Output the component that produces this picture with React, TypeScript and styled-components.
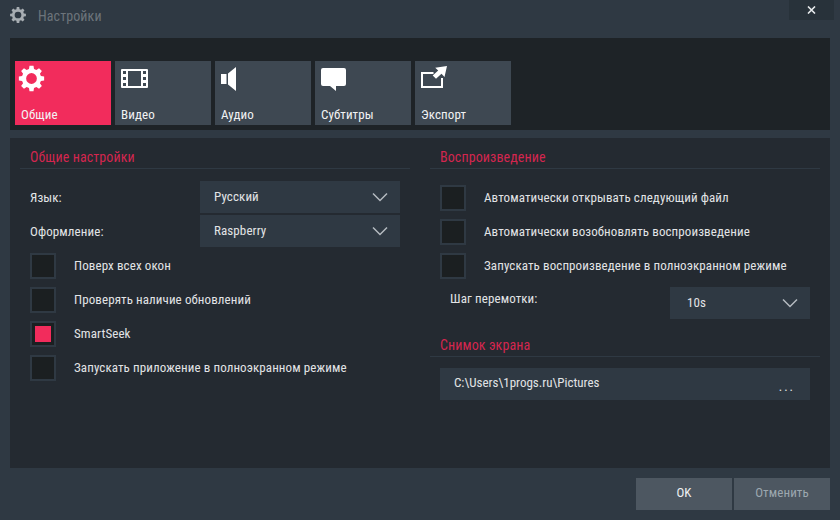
import React from "react";
import styled, { createGlobalStyle } from "styled-components";

const GlobalStyle = createGlobalStyle`
  html, body {
    margin: 0;
    padding: 0;
    background: #2f3943;
  }
  * {
    box-sizing: border-box;
  }
`;

const Window = styled.div`
  width: 840px;
  height: 520px;
  display: flex;
  flex-direction: column;
  overflow: hidden;
  background: #2f3943;
  color: #e2e4e6;
  font-family: "Roboto", "Liberation Sans", sans-serif;
  font-size: 13px;
  font-stretch: condensed;
  letter-spacing: 0.1px;
`;

const TitleBar = styled.div`
  height: 38px;
  flex: none;
  display: flex;
  align-items: flex-start;
  padding: 7px 6px 0 10px;
`;

const TitleGear = styled.svg`
  width: 16px;
  height: 16px;
  fill: #a7adb2;
`;

const TitleText = styled.span`
  flex: 1;
  margin-left: 12px;
  padding-top: 1px;
  font-size: 14px;
  color: #6c747b;
`;

const CloseButton = styled.div`
  width: 45px;
  height: 20px;
  margin-top: -7px;
  display: flex;
  align-items: center;
  justify-content: center;
  background: #28323a;
`;

const TabStrip = styled.div`
  height: 92px;
  flex: none;
  margin: 0 10px;
  padding: 23px 5px 5px;
  display: flex;
  gap: 4px;
  background: #1e2327;
`;

const Tab = styled.div<{ $active?: boolean }>`
  width: 96px;
  height: 64px;
  padding: 3px 2px 3px;
  display: flex;
  flex-direction: column;
  justify-content: space-between;
  background: ${(p) => (p.$active ? "#f22c5c" : "#3e4852")};
  color: #f2f3f4;
`;

const TabIcon = styled.svg`
  width: 34px;
  height: 30px;
  display: block;
  fill: #fff;
`;

const TabLabel = styled.span`
  padding-left: 4px;
  line-height: 14px;
`;

const Panel = styled.div`
  height: 330px;
  flex: none;
  margin: 8px 10px 0;
  padding: 0 10px;
  display: grid;
  grid-template-columns: 390px 390px;
  column-gap: 20px;
  background: #242a31;
`;

const Column = styled.div`
  display: flex;
  flex-direction: column;
`;

const SectionTitle = styled.div<{ $spaced?: boolean }>`
  height: ${(p) => (p.$spaced ? "28px" : "31px")};
  margin-top: ${(p) => (p.$spaced ? "8px" : "0")};
  padding: ${(p) => (p.$spaced ? "4px" : "7px")} 0 0 10px;
  display: flex;
  align-items: center;
  border-bottom: 1px solid #2f3943;
  font-size: 14px;
  color: #d3264f;
`;

const FormGroup = styled.div<{ $top: number }>`
  margin-top: ${(p) => p.$top}px;
  display: flex;
  flex-direction: column;
`;

const ComboRow = styled.div<{ $inset?: boolean }>`
  height: 32px;
  margin-bottom: 2px;
  padding: ${(p) => (p.$inset ? "0 10px 0 20px" : "0 10px")};
  display: flex;
  align-items: ${(p) => (p.$inset ? "flex-start" : "center")};
  justify-content: space-between;
`;

const ComboLabel = styled.span<{ $raised?: boolean }>`
  padding-top: ${(p) => (p.$raised ? "4px" : "0")};
`;

const Combo = styled.div<{ $width: number; $wide?: boolean }>`
  width: ${(p) => p.$width}px;
  height: 32px;
  flex: none;
  padding: 0 12px 0 ${(p) => (p.$wide ? "17px" : "14px")};
  display: flex;
  align-items: center;
  justify-content: space-between;
  background: #2f3943;
`;

const ComboValue = styled.span`
  margin-bottom: 2px;
`;

const Chevron = styled.svg`
  width: 16px;
  height: 10px;
  fill: none;
  stroke: #b4bac0;
  stroke-width: 1.5;
`;

const CheckRow = styled.div`
  height: 26px;
  margin-bottom: 8px;
  padding-left: 10px;
  display: flex;
  align-items: center;
  gap: 18px;
`;

const CheckLabel = styled.span`
  margin-bottom: 2px;
`;

const CheckBox = styled.div`
  width: 26px;
  height: 26px;
  flex: none;
  padding: 3px;
  border: 2px solid #2f3943;
  background: #1b1f21;
`;

const CheckMark = styled.div`
  width: 16px;
  height: 16px;
  background: #f22c5c;
`;

const PathBox = styled.div`
  height: 32px;
  margin: 11px 10px 0;
  padding: 0 14px;
  display: flex;
  align-items: center;
  justify-content: space-between;
  background: #2f3943;
`;

const PathText = styled.span`
  margin-bottom: 3px;
  letter-spacing: 0;
`;

const Dots = styled.span`
  margin: 4px 1px 0 0;
  letter-spacing: 2px;
`;

const Footer = styled.div`
  flex: 1;
  padding: 10px 10px 0;
  display: flex;
  justify-content: flex-end;
  gap: 2px;
`;

const FooterButton = styled.div<{ $muted?: boolean }>`
  width: 96px;
  height: 32px;
  padding-bottom: 3px;
  display: flex;
  align-items: center;
  justify-content: center;
  background: #4d5761;
  color: ${(p) => (p.$muted ? "#9ca7af" : "#eef0f1")};
`;

// 8-tooth cog with a round hole, drawn around (cx, cy)
const gearPath = (cx: number, cy: number, r: number) => {
  const pt = (deg: number, radius: number) => {
    const a = (deg * Math.PI) / 180;
    return `${(cx + radius * Math.sin(a)).toFixed(2)} ${(cy - radius * Math.cos(a)).toFixed(2)}`;
  };
  const points: string[] = [];
  for (let i = 0; i < 8; i++) {
    const a = i * 45;
    points.push(pt(a - 15, r * 0.76), pt(a - 9, r), pt(a + 9, r), pt(a + 15, r * 0.76));
  }
  const hole = r * 0.42;
  return (
    `M${points.join("L")}Z` +
    `M${cx - hole} ${cy}a${hole} ${hole} 0 1 0 ${hole * 2} 0a${hole} ${hole} 0 1 0 ${-hole * 2} 0Z`
  );
};

const ChevronIcon = () => (
  <Chevron viewBox="0 0 16 10">
    <path d="M1 1.5 8 8.5 15 1.5" />
  </Chevron>
);

const tabs = [
  {
    label: "Общие",
    icon: <path fillRule="evenodd" d={gearPath(14.5, 14.5, 12.8)} />,
  },
  {
    label: "Видео",
    icon: (
      <path
        fillRule="evenodd"
        d="M5 5h25a1 1 0 0 1 1 1v17a1 1 0 0 1-1 1H5a1 1 0 0 1-1-1V6a1 1 0 0 1 1-1ZM6 7v3h3V7H6Zm0 6v3h3v-3H6Zm0 6v3h3v-3H6ZM11 7v15h13V7H11Zm15 0v3h3V7h-3Zm0 6v3h3v-3h-3Zm0 6v3h3v-3h-3Z"
      />
    ),
  },
  {
    label: "Аудио",
    icon: <path d="M4 10h5.5v10H4ZM11 9.5 19 3v24l-8-6.5Z" />,
  },
  {
    label: "Субтитры",
    icon: (
      <path d="M6 4h21a2 2 0 0 1 2 2v14a2 2 0 0 1-2 2h-8v5l-6-5H6a2 2 0 0 1-2-2V6a2 2 0 0 1 2-2Z" />
    ),
  },
  {
    label: "Экспорт",
    icon: (
      <>
        <path d="M16.5 8H4v16h22V14h-2v8H6V10h10.5Z" />
        <path d="M30 2l-2.5 11-3-3.2-5.5 5-3.3-3.3 5.5-5-3-2.7Z" />
      </>
    ),
  },
];

const leftChecks = [
  { label: "Поверх всех окон" },
  { label: "Проверять наличие обновлений" },
  { label: "SmartSeek", checked: true },
  { label: "Запускать приложение в полноэкранном режиме" },
];

const rightChecks = [
  "Автоматически открывать следующий файл",
  "Автоматически возобновлять воспроизведение",
  "Запускать воспроизведение в полноэкранном режиме",
];

const App = () => {
  return (
    <Window>
      <GlobalStyle />
      <TitleBar>
        <TitleGear viewBox="0 0 16 16">
          <path fillRule="evenodd" d={gearPath(8, 8, 8)} />
        </TitleGear>
        <TitleText>Настройки</TitleText>
        <CloseButton>
          <svg width="9" height="8" viewBox="0 0 9 8" stroke="#e8ebed" strokeWidth="1.6">
            <path d="M1 0.5 8 7.5M8 0.5 1 7.5" />
          </svg>
        </CloseButton>
      </TitleBar>

      <TabStrip>
        {tabs.map((tab, i) => (
          <Tab key={tab.label} $active={i === 0}>
            <TabIcon viewBox="0 0 34 30">{tab.icon}</TabIcon>
            <TabLabel>{tab.label}</TabLabel>
          </Tab>
        ))}
      </TabStrip>

      <Panel>
        <Column>
          <SectionTitle>Общие настройки</SectionTitle>
          <FormGroup $top={12}>
            <ComboRow>
              <ComboLabel>Язык:</ComboLabel>
              <Combo $width={200}>
                <ComboValue>Русский</ComboValue>
                <ChevronIcon />
              </Combo>
            </ComboRow>
            <ComboRow>
              <ComboLabel>Оформление:</ComboLabel>
              <Combo $width={200}>
                <ComboValue>Raspberry</ComboValue>
                <ChevronIcon />
              </Combo>
            </ComboRow>
          </FormGroup>
          <FormGroup $top={4}>
            {leftChecks.map((item) => (
              <CheckRow key={item.label}>
                <CheckBox>{item.checked && <CheckMark />}</CheckBox>
                <CheckLabel>{item.label}</CheckLabel>
              </CheckRow>
            ))}
          </FormGroup>
        </Column>

        <Column>
          <SectionTitle>Воспроизведение</SectionTitle>
          <FormGroup $top={16}>
            {rightChecks.map((label) => (
              <CheckRow key={label}>
                <CheckBox />
                <CheckLabel>{label}</CheckLabel>
              </CheckRow>
            ))}
          </FormGroup>
          <ComboRow $inset>
            <ComboLabel $raised>Шаг перемотки:</ComboLabel>
            <Combo $width={140} $wide>
              <ComboValue>10s</ComboValue>
              <ChevronIcon />
            </Combo>
          </ComboRow>
          <SectionTitle $spaced>Снимок экрана</SectionTitle>
          <PathBox>
            <PathText>C:\Users\1progs.ru\Pictures</PathText>
            <Dots>...</Dots>
          </PathBox>
        </Column>
      </Panel>

      <Footer>
        <FooterButton>OK</FooterButton>
        <FooterButton $muted>Отменить</FooterButton>
      </Footer>
    </Window>
  );
};

export default App;
